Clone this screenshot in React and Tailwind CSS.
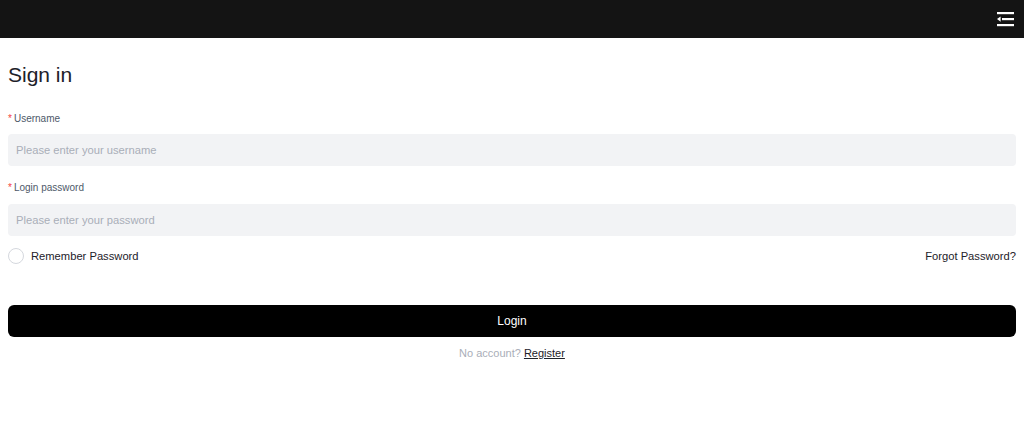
import React, { useState } from 'react';

function FoldIcon() {
    return (
        <svg width="20" height="18" viewBox="0 0 20 18" fill="none">
            <rect x="1" y="2" width="17" height="2.2" fill="#fff" />
            <rect x="6" y="8" width="12" height="2.2" fill="#fff" />
            <path d="M1 9.1 L4.6 6.4 L4.6 11.8 Z" fill="#fff" />
            <rect x="1" y="14" width="17" height="2.2" fill="#fff" />
        </svg>
    );
}

export default function App() {
    const [remember, setRemember] = useState(false);

    return (
        <div className="min-h-screen bg-white" style={{ fontFamily: '"Liberation Sans", Arial, sans-serif' }}>
            <div className="h-[38px] bg-[#141414] flex items-center justify-end pr-[8px]">
                <FoldIcon />
            </div>

            <div className="px-[8px]">
                <h1 className="text-[21px] text-[#1d2129] mt-[25px] leading-[24px]">Sign in</h1>

                <div className="mt-[26px]">
                    <label className="block text-[10px] text-[#4e5969] leading-[12px]">
                        <span className="text-[#f53f3f] mr-[2px]">*</span>Username
                    </label>
                    <input
                        className="mt-[9px] w-full h-[32px] rounded-[4px] bg-[#f2f3f5] px-[8px] text-[11.2px] outline-none placeholder:text-[#a9aeb8]"
                        placeholder="Please enter your username"
                    />
                </div>

                <div className="mt-[16px]">
                    <label className="block text-[10px] text-[#4e5969] leading-[12px]">
                        <span className="text-[#f53f3f] mr-[2px]">*</span>Login password
                    </label>
                    <input
                        type="password"
                        className="mt-[10px] w-full h-[32px] rounded-[4px] bg-[#f2f3f5] px-[8px] text-[11.2px] outline-none placeholder:text-[#a9aeb8]"
                        placeholder="Please enter your password"
                    />
                </div>

                <div className="flex items-center justify-between mt-[12px] h-[16px]">
                    <label className="flex items-center gap-[7px] text-[11.2px] text-[#1d2129] cursor-pointer">
                        <span
                            className="w-[16px] h-[16px] rounded-full border border-[#d5d8de] bg-white"
                            onClick={() => setRemember(!remember)}
                        ></span>
                        Remember Password
                    </label>
                    <a className="text-[11.2px] text-[#1d2129] cursor-pointer">Forgot Password?</a>
                </div>

                <button className="mt-[41px] w-full h-[32px] rounded-[6px] bg-black text-white text-[12px]">
                    Login
                </button>

                <p className="text-center text-[11px] text-[#a9aeb8] mt-[8px]">
                    No account? <a className="text-[#1d2129] underline cursor-pointer">Register</a>
                </p>
            </div>
        </div>
    );
}
